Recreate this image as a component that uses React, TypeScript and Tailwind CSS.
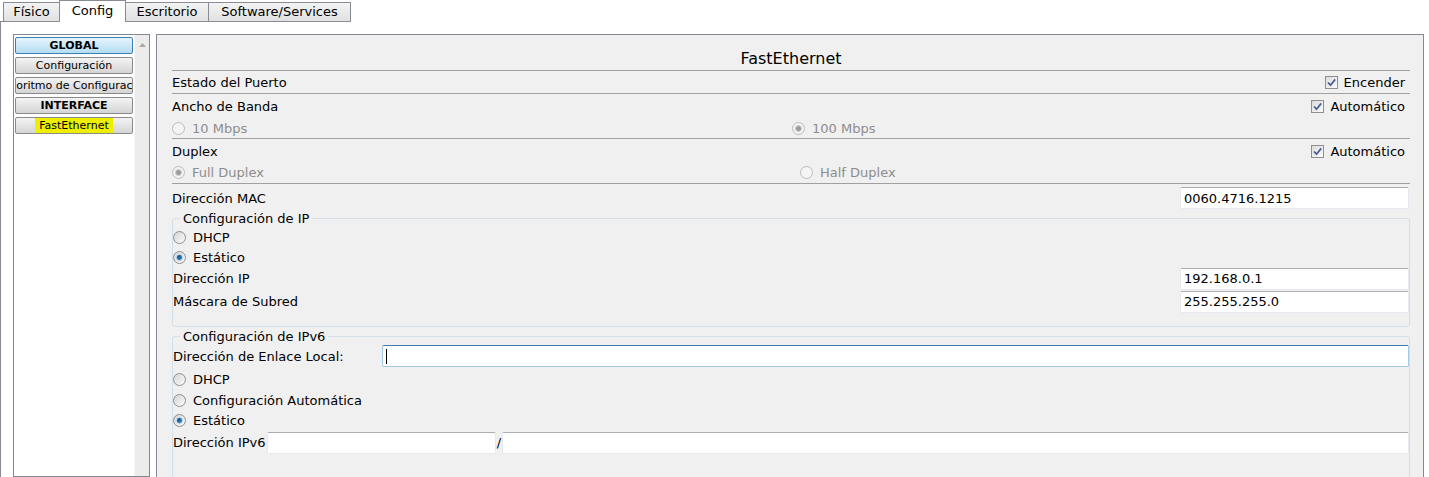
import clsx from "clsx";

const tabs = [
  { label: "Físico", width: "w-[57px]" },
  { label: "Config", width: "w-[67px]", active: true },
  { label: "Escritorio", width: "w-[84px]" },
  { label: "Software/Services", width: "w-[143px]" },
];

function Radio({ checked = false, disabled = false }: { checked?: boolean; disabled?: boolean }) {
  return (
    <span
      className={clsx(
        "flex h-[13px] w-[13px] shrink-0 items-center justify-center rounded-full border",
        disabled ? "border-[#bcbcbc] bg-[#f4f4f4]" : "border-[#8e8f8f] bg-linear-to-br from-[#d4d4d4] to-[#fcfcfc]",
      )}
    >
      {checked && (
        <span
          className={clsx(
            "h-[7px] w-[7px] rounded-full border",
            disabled ? "border-[#d0d0d0] bg-[#9c9c9c]" : "border-[#a9cbe6] bg-linear-to-br from-[#0a3f75] to-[#3b94d3]",
          )}
        />
      )}
    </span>
  );
}

function RadioLabel({ label, checked, disabled }: { label: string; checked?: boolean; disabled?: boolean }) {
  return (
    <div className={clsx("flex items-center gap-[7px]", disabled && "text-[#8d8d8d]")}>
      <Radio checked={checked} disabled={disabled} />
      <span>{label}</span>
    </div>
  );
}

function Checkbox({ label }: { label: string }) {
  return (
    <div className="flex items-center gap-[6px] pr-[5px]">
      <span className="flex h-[13px] w-[13px] shrink-0 items-center justify-center border border-[#8e8f8f] bg-linear-to-br from-[#dcdcdc] to-[#fbfbfb]">
        <svg viewBox="0 0 11 11" className="h-[11px] w-[11px]">
          <path d="M2 5.5 4.5 8.2 9.2 2.4" fill="none" stroke="#4d5f97" strokeWidth="1.8" />
        </svg>
      </span>
      <span>{label}</span>
    </div>
  );
}

function TextBox({ value, focused, className }: { value?: string; focused?: boolean; className?: string }) {
  return (
    <div
      className={clsx(
        "flex h-[22px] items-center rounded-[2px] border bg-white pl-[3px]",
        focused ? "border-[#a4c9e3] border-t-[#3d7bad]" : "border-[#e3e9ef] border-t-[#abadb3]",
        className,
      )}
    >
      {value}
      {focused && <span className="h-[15px] w-px bg-black" />}
    </div>
  );
}

function Separator() {
  return <div className="h-px bg-[#a0a0a0]" />;
}

function SideButton({ children, bold, blue }: { children: React.ReactNode; bold?: boolean; blue?: boolean }) {
  return (
    <div
      className={clsx(
        "flex h-[17px] shrink-0 items-center justify-center overflow-hidden whitespace-nowrap rounded-[2px] border text-[11px]",
        bold && "font-bold",
        blue ? "border-[#3c7fb1] bg-linear-to-b from-[#e6f5fd] to-[#b3dcf2]" : "border-[#8a8a8a] bg-linear-to-b from-[#f4f4f4] to-[#d4d4d4]",
      )}
    >
      {children}
    </div>
  );
}

function Sidebar() {
  return (
    <div className="flex h-full w-[137px] shrink-0 border border-[#828790]">
      <div className="flex w-[120px] flex-col gap-[3px] bg-white px-px pt-[2px]">
        <SideButton bold blue>GLOBAL</SideButton>
        <SideButton>Configuración</SideButton>
        <SideButton>Algoritmo de Configuración</SideButton>
        <SideButton bold>INTERFACE</SideButton>
        <SideButton>
          <span className="bg-[#eeee00] px-[4px]">FastEthernet</span>
        </SideButton>
      </div>
      <div className="flex flex-1 justify-center border-l border-[#f8f8f8] bg-[#ececec] pt-[8px]">
        <svg viewBox="0 0 7 4" className="h-[4px] w-[7px]">
          <path d="M0 4 3.5 0 7 4z" fill="#a8a8a8" />
        </svg>
      </div>
    </div>
  );
}

export default function App() {
  return (
    <div className="h-[477px] w-[1429px] overflow-hidden bg-white font-['DejaVu_Sans',sans-serif] text-[13px] leading-[15px] text-black">
      <div className="flex h-[22px] items-end">
        <div className="h-[22px] w-[3px] border-b border-[#898c95]" />
        {tabs.map((tab, i) =>
          tab.active ? (
            <div
              key={tab.label}
              className={clsx("relative z-10 -ml-px flex h-[22px] items-start justify-center border-x border-t border-[#898c95] bg-white pt-[2px]", tab.width)}
            >
              {tab.label}
            </div>
          ) : (
            <div
              key={tab.label}
              className={clsx(
                "flex h-[20px] items-center justify-center border border-[#898c95] bg-linear-to-b from-[#f3f3f3] to-[#e1e1e1] pb-[1px]",
                i > 0 && "-ml-px",
                tab.width,
              )}
            >
              {tab.label}
            </div>
          ),
        )}
      </div>

      <div className="flex h-[455px] border-l border-[#898c95] pl-[12px] pt-[12px]">
        <Sidebar />
        <div className="ml-[6px] h-[460px] w-[1268px] shrink-0 border border-[#828790] bg-[#f0f0f0] pl-[15px] pr-[13px]">
          <div className="flex h-[35px] justify-center pt-[14px] text-[16px] leading-[19px]">FastEthernet</div>
          <Separator />
          <div className="flex h-[22px] items-center justify-between">
            <span>Estado del Puerto</span>
            <Checkbox label="Encender" />
          </div>
          <Separator />
          <div className="flex h-[23px] items-center justify-between pt-px">
            <span>Ancho de Banda</span>
            <Checkbox label="Automático" />
          </div>
          <div className="flex h-[21px] items-center pt-[1px]">
            <div className="w-[620px]">
              <RadioLabel label="10 Mbps" disabled />
            </div>
            <RadioLabel label="100 Mbps" checked disabled />
          </div>
          <Separator />
          <div className="flex h-[23px] items-center justify-between pt-px">
            <span>Duplex</span>
            <Checkbox label="Automático" />
          </div>
          <div className="flex h-[21px] items-center">
            <div className="w-[628px]">
              <RadioLabel label="Full Duplex" checked disabled />
            </div>
            <RadioLabel label="Half Duplex" disabled />
          </div>
          <Separator />
          <div className="flex h-[27px] items-start justify-between pt-[3px]">
            <span className="pt-[4px]">Dirección MAC</span>
            <TextBox value="0060.4716.1215" className="mr-px w-[229px]" />
          </div>

          <fieldset className="rounded-[3px] border border-[#d5dfe5] pb-[13px]">
            <legend className="ml-[7px] px-[3px] leading-[15px]">Configuración de IP</legend>
            <div className="flex h-[21px] items-center pt-px">
              <RadioLabel label="DHCP" />
            </div>
            <div className="flex h-[20px] items-center">
              <RadioLabel label="Estático" checked />
            </div>
            <div className="flex h-[23px] items-center justify-between">
              <span>Dirección IP</span>
              <TextBox value="192.168.0.1" className="w-[229px]" />
            </div>
            <div className="flex h-[23px] items-center justify-between">
              <span>Máscara de Subred</span>
              <TextBox value="255.255.255.0" className="w-[229px]" />
            </div>
          </fieldset>

          <fieldset className="mt-[2px] rounded-[3px] border border-[#d5dfe5] pb-[60px]">
            <legend className="ml-[7px] px-[3px] leading-[15px]">Configuración de IPv6</legend>
            <div className="flex h-[24px] items-center">
              <span className="w-[209px] shrink-0">Dirección de Enlace Local:</span>
              <TextBox focused className="flex-1" />
            </div>
            <div className="flex h-[22px] items-center">
              <RadioLabel label="DHCP" />
            </div>
            <div className="flex h-[20px] items-center">
              <RadioLabel label="Configuración Automática" />
            </div>
            <div className="flex h-[21px] items-center">
              <RadioLabel label="Estático" checked />
            </div>
            <div className="flex h-[23px] items-center">
              <span className="w-[94px] shrink-0 whitespace-nowrap">Dirección IPv6</span>
              <TextBox className="w-[229px] shrink-0" />
              <span className="w-[6px] shrink-0 text-center">/</span>
              <TextBox className="flex-1" />
            </div>
          </fieldset>
        </div>
      </div>
    </div>
  );
}
